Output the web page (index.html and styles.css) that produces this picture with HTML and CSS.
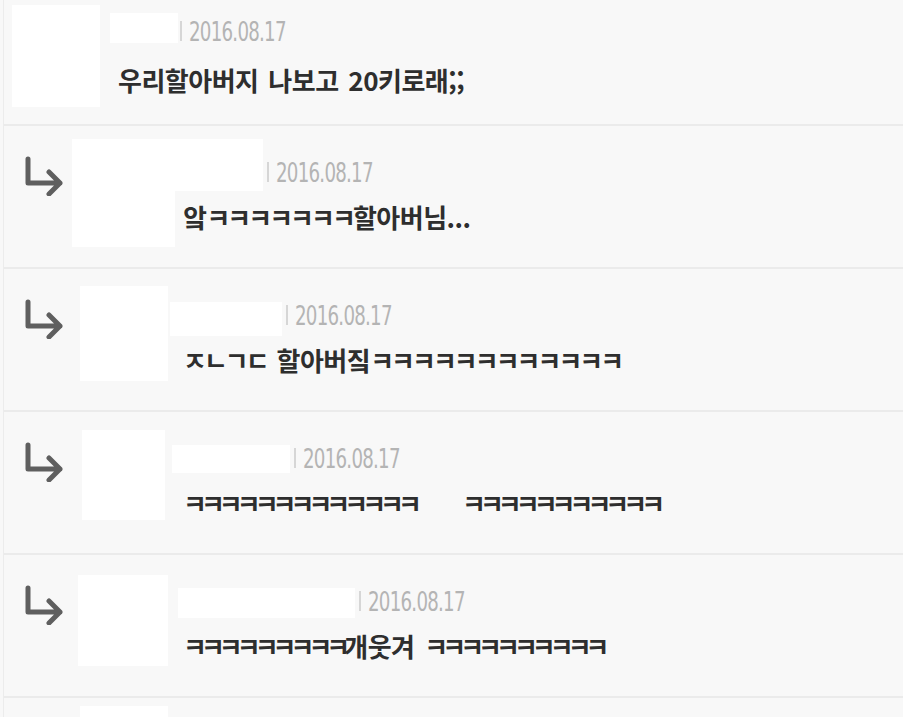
FILE: index.html
```html
<!DOCTYPE html>
<html lang="ko">
<head>
  <meta charset="UTF-8">
  <meta name="viewport" content="width=device-width, initial-scale=1.0">
  <title>댓글</title>
  <link rel="stylesheet" href="styles.css">
</head>
<body>
  <div class="comments">
    <!-- first comment -->
    <div class="item root">
      <div class="avatar"></div>
      <div class="body">
        <div class="head">
          <span class="name"></span>
          <span class="date"><i class="sep"></i><span class="num">2016.08.17</span></span>
        </div>
        <p class="text">우리할아버지 나보고 20키로래;;</p>
      </div>
    </div>

    <!-- replies -->
    <div class="item reply r2">
      <svg class="reply-icon" viewBox="0 0 40 40"><path d="M4 3 V27 H36 M25 16 L36 27 L25 38"/></svg>
      <div class="avatar-col"><div class="avatar"></div></div>
      <div class="body">
        <div class="head">
          <span class="name"></span>
          <span class="date"><i class="sep"></i><span class="num">2016.08.17</span></span>
        </div>
        <p class="text">앜<span class="kk wide">ㅋㅋㅋㅋㅋㅋㅋ</span>할아버님...</p>
      </div>
    </div>

    <div class="item reply r3">
      <svg class="reply-icon" viewBox="0 0 40 40"><path d="M4 3 V27 H36 M25 16 L36 27 L25 38"/></svg>
      <div class="avatar-col"><div class="avatar"></div></div>
      <div class="body">
        <div class="head">
          <span class="name"></span>
          <span class="date"><i class="sep"></i><span class="num">2016.08.17</span></span>
        </div>
        <p class="text"><span class="jamo">ㅈㄴㄱㄷ</span> 할아버짘<span class="kk wide">ㅋㅋㅋㅋㅋㅋㅋㅋㅋㅋㅋㅋ</span></p>
      </div>
    </div>

    <div class="item reply r4">
      <svg class="reply-icon" viewBox="0 0 40 40"><path d="M4 3 V27 H36 M25 16 L36 27 L25 38"/></svg>
      <div class="avatar-col"><div class="avatar"></div></div>
      <div class="body">
        <div class="head">
          <span class="name"></span>
          <span class="date"><i class="sep"></i><span class="num">2016.08.17</span></span>
        </div>
        <p class="text"><span class="kk">ㅋㅋㅋㅋㅋㅋㅋㅋㅋㅋㅋㅋㅋ</span><span class="blank"></span><span class="kk">ㅋㅋㅋㅋㅋㅋㅋㅋㅋㅋㅋ</span></p>
      </div>
    </div>

    <div class="item reply r5">
      <svg class="reply-icon" viewBox="0 0 40 40"><path d="M4 3 V27 H36 M25 16 L36 27 L25 38"/></svg>
      <div class="avatar-col"><div class="avatar"></div></div>
      <div class="body">
        <div class="head">
          <span class="name"></span>
          <span class="date"><i class="sep"></i><span class="num">2016.08.17</span></span>
        </div>
        <p class="text"><span class="kk">ㅋㅋㅋㅋㅋㅋㅋㅋㅋ</span>개웃겨 <span class="kk">ㅋㅋㅋㅋㅋㅋㅋㅋㅋㅋ</span></p>
      </div>
    </div>

    <div class="item reply r6">
      <div class="avatar-col"><div class="avatar"></div></div>
    </div>
  </div>
</body>
</html>
```

FILE: styles.css
```css
html, body {
  margin: 0;
  height: 100%;
  overflow: hidden;
  background: #f8f8f8;
}
body {
  font-family: "Noto Sans CJK KR", "Noto Sans", sans-serif;
  color: #2e2e2e;
}
.comments {
  margin-left: 3px;
  border-left: 1px solid #ececec;
}
.item {
  display: flex;
  align-items: flex-start;
  border-bottom: 2px solid #ebebeb;
  box-sizing: border-box;
}
.item.root {
  height: 126px;
  padding-left: 8px;
}
.item.reply {
  height: 143px;
  padding-left: 20px;
}
.avatar {
  background: #fff;
  flex: none;
}
.root .avatar {
  width: 88px;
  height: 102px;
  margin-top: 5px;
}
.reply-icon {
  flex: none;
  width: 40px;
  height: 40px;
  margin-top: 30px;
  fill: none;
  stroke: #5f5f5f;
  stroke-width: 5;
  stroke-linecap: round;
  stroke-linejoin: round;
}
.avatar-col {
  flex: none;
  width: 98px;
  margin-left: 8px;
}
.body {
  flex: 1;
  display: flex;
  flex-direction: column;
}
.root .body {
  margin-left: 10px;
}
.head {
  display: flex;
  align-items: flex-start;
  height: 76px;
}
.root .head {
  height: 65px;
}
.name {
  background: #fff;
  flex: none;
}
.date {
  display: flex;
  align-items: center;
  height: 28px;
  margin-top: 32px;
  margin-left: 4px;
  font-family: "DejaVu Sans Condensed", "DejaVu Sans", sans-serif;
  font-stretch: condensed;
  font-size: 27px;
  letter-spacing: -1px;
  color: #b4b4b4;
}
.num {
  display: inline-block;
  transform: scaleX(0.75);
  transform-origin: left center;
}
.root .date {
  margin-top: 17px;
  margin-left: 2px;
}
.sep {
  display: block;
  width: 2px;
  height: 20px;
  background: #d6d6d6;
  margin-right: 7px;
}
.text {
  margin: 0;
  padding-left: 13px;
  font-size: 26px;
  line-height: 30px;
  font-weight: 700;
  letter-spacing: -0.5px;
  word-spacing: 3px;
  white-space: nowrap;
}
.root .text {
  padding-left: 8px;
}
.kk {
  letter-spacing: -6px;
}
.kk.wide {
  letter-spacing: -3px;
}
.jamo {
  letter-spacing: -3px;
}
.blank {
  display: inline-block;
  width: 46px;
}

/* blurred name and avatar boxes, each row was cropped differently */
.root .name { width: 68px; height: 30px; margin-top: 13px; }

.r2 .avatar { width: 103px; height: 108px; margin-top: 13px; }
.r2 .name { width: 93px; height: 52px; margin-top: 13px; }

.r3 .avatar { width: 88px; height: 95px; margin-top: 17px; margin-left: 8px; }
.r3 .name { width: 112px; height: 34px; margin-top: 33px; }

.r4 .avatar { width: 83px; height: 90px; margin-top: 18px; margin-left: 10px; }
.r4 .name { width: 118px; height: 28px; margin-top: 33px; margin-left: 2px; }

.r5 .avatar { width: 90px; height: 91px; margin-top: 20px; margin-left: 6px; }
.r5 .name { width: 177px; height: 30px; margin-top: 33px; margin-left: 8px; }

.item.r6 { height: 20px; border-bottom: 0; }
.r6 .avatar-col { margin-left: 56px; }
.r6 .avatar { width: 88px; height: 12px; margin-top: 8px; }
```
